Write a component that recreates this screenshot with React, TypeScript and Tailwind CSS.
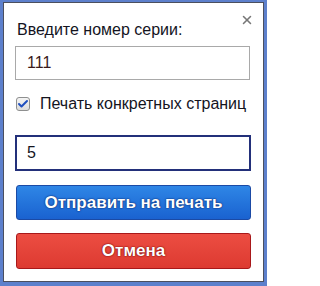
import { Check, X } from 'lucide-react';

export default function App() {
  return (
    <div className="w-[267px] h-[286px] bg-[#5d80cc] pt-[2px] pl-[3px] pr-[3px] pb-[4px] font-['Liberation_Sans',Arial,sans-serif]">
      <div className="relative h-full border border-[#4b4f5e] bg-white pt-[18px] pl-[11px] pr-[12px]">
        <button className="absolute right-[9px] top-[10px] text-[#777777]">
          <X size={14} strokeWidth={2.6} />
        </button>

        <div className="text-[16px] leading-[18px] text-[#14141e] pl-[2px]">Введите номер серии:</div>

        <div className="mt-[7px] h-[34px] w-[235px] border border-[#a9a9a9] flex items-center pl-[11px] text-[16px] text-[#3a1a1a]">
          111
        </div>

        <label className="mt-[15px] flex items-center gap-[10px] pl-[1px]">
          <span className="w-[14px] h-[14px] rounded-[3px] border border-[#8e8f8f] bg-gradient-to-b from-[#f4f4f4] to-[#dcdcdc] flex items-center justify-center">
            <Check size={12} strokeWidth={4} className="text-[#1f4fbf]" />
          </span>
          <span className="text-[16px] leading-[18px] text-[#14141e] whitespace-nowrap">Печать конкретных страниц</span>
        </label>

        <div className="mt-[22px] h-[36px] w-[236px] border-2 border-[#23307a] flex items-center pl-[10px] text-[16px] text-[#14141e]">
          5
        </div>

        <button className="mt-[14px] h-[35px] w-[235px] ml-[1px] rounded-[3px] border border-[#1b4aa5] bg-gradient-to-b from-[#2f86e6] to-[#1a62d0] text-white font-bold text-[17px] [text-shadow:0_0_2px_#082a70,0_0_1px_#082a70]">
          Отправить на печать
        </button>

        <button className="mt-[13px] h-[36px] w-[235px] ml-[1px] rounded-[3px] border border-[#a8181a] bg-gradient-to-b from-[#ec4d42] to-[#dd3a31] text-white font-bold text-[17px] [text-shadow:0_0_2px_#7a0a0a,0_0_1px_#7a0a0a]">
          Отмена
        </button>
      </div>
    </div>
  );
}
